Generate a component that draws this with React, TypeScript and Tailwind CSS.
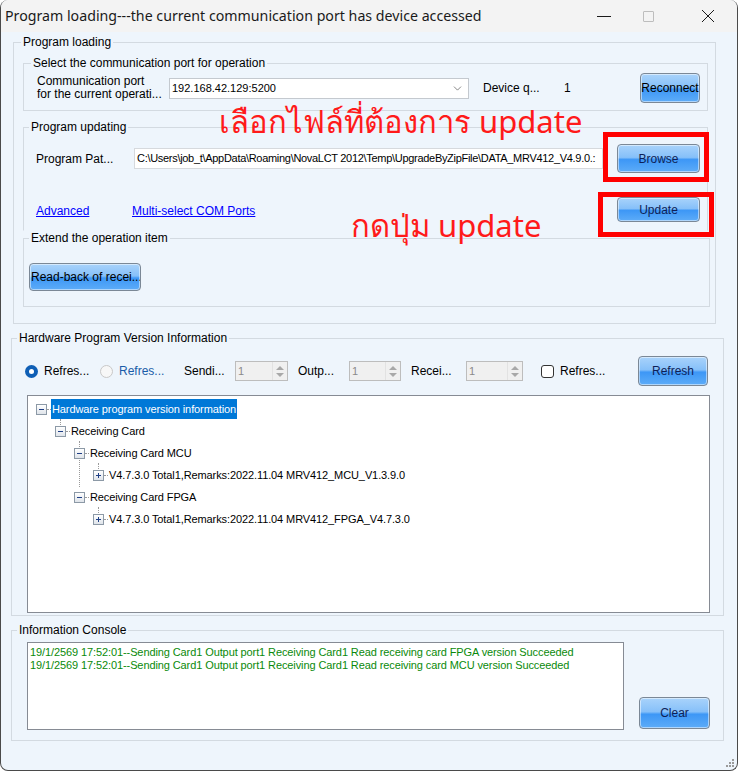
import { ChevronDown } from 'lucide-react';

// Shared classes for the glossy blue WinForms-style buttons
const BTN =
  'shrink-0 flex items-center justify-center rounded-[4px] border border-[#7b8896] bg-[linear-gradient(180deg,#a9d3fb_0%,#86c0f9_46%,#3d97f6_54%,#5dacf8_100%)] shadow-[inset_0_0_0_1px_rgba(255,255,255,0.5)] text-[12px]';
const GROUP = 'border border-[#d3dae1]';
const LEGEND = 'px-[2px] leading-[14px] text-[12px] text-black';

function SpinBox({ width }: { width: string }) {
  return (
    <div className={`${width} shrink-0 h-[20px] flex border border-[#bdbdbd] bg-[#f0f0f0]`}>
      <span className="flex-1 pl-[2px] text-[11px] leading-[18px] text-[#8a8a8a]">1</span>
      <div className="w-[15px] flex flex-col items-center justify-center gap-[3px] border-l border-[#e2e2e2]">
        <span className="w-0 h-0 border-x-[4px] border-x-transparent border-b-[4px] border-b-[#a8a8a8]" />
        <span className="w-0 h-0 border-x-[4px] border-x-transparent border-t-[4px] border-t-[#a8a8a8]" />
      </div>
    </div>
  );
}

function Expander({ open }: { open: boolean }) {
  return (
    <span className="relative shrink-0 w-[11px] h-[11px] border border-[#8c99a6] bg-[linear-gradient(180deg,#ffffff,#dfe4ea)]">
      <span className="absolute left-[2px] top-[4px] w-[5px] h-[1px] bg-[#1f3f86]" />
      {!open && <span className="absolute left-[4px] top-[2px] w-[1px] h-[5px] bg-[#1f3f86]" />}
    </span>
  );
}

const TREE_ROWS = [
  { indent: 'pl-[8px]', label: 'Hardware program version information', open: true, selected: true },
  { indent: 'pl-[27px]', label: 'Receiving Card', open: true },
  { indent: 'pl-[46px]', label: 'Receiving Card MCU', open: true },
  { indent: 'pl-[65px]', label: 'V4.7.3.0 Total1,Remarks:2022.11.04 MRV412_MCU_V1.3.9.0', open: false },
  { indent: 'pl-[46px]', label: 'Receiving Card FPGA', open: true },
  { indent: 'pl-[65px]', label: 'V4.7.3.0 Total1,Remarks:2022.11.04 MRV412_FPGA_V4.7.3.0', open: false },
];

function Tree() {
  return (
    <div className="relative ml-[10px] h-[218px] border border-[#868b94] bg-white pt-[2px]">
      {/* dotted connectors */}
      <span className="absolute left-[32px] top-[23px] h-[6px] border-l border-dotted border-[#9a9a9a]" />
      <span className="absolute left-[51px] top-[45px] h-[6px] border-l border-dotted border-[#9a9a9a]" />
      <span className="absolute left-[51px] top-[62px] h-[29px] border-l border-dotted border-[#9a9a9a]" />
      <span className="absolute left-[70px] top-[67px] h-[6px] border-l border-dotted border-[#9a9a9a]" />
      <span className="absolute left-[70px] top-[111px] h-[6px] border-l border-dotted border-[#9a9a9a]" />
      {TREE_ROWS.map((row, i) => (
        <div key={i} className={`${row.indent} h-[22px] flex items-center text-[11px] tracking-[-0.1px]`}>
          <Expander open={row.open} />
          <span className="w-[4px] border-t border-dotted border-[#9a9a9a]" />
          <span
            className={
              row.selected
                ? 'px-[1px] leading-[20px] bg-[#0078d7] text-white'
                : 'px-[1px] leading-[20px] text-black'
            }
          >
            {row.label}
          </span>
        </div>
      ))}
    </div>
  );
}

export default function App() {
  return (
    <div className="relative w-[738px] h-[771px] overflow-hidden rounded-[8px] border-x border-b border-[#4a4a4a] bg-[#eef5fc] font-['Liberation_Sans',Arial,sans-serif] text-[12px] text-black">
      {/* Title bar */}
      <div className="h-[32px] flex items-center bg-[#f3f3f3] pl-[4px]">
        <span className="font-['Noto_Sans',sans-serif] text-[14.2px] text-[#1a1a1a]">
          Program loading---the current communication port has device accessed
        </span>
        <div className="ml-auto flex items-center h-full">
          <span className="w-[14px] h-[1px] bg-[#1a1a1a] mr-[32px]" />
          <span className="w-[11px] h-[11px] border border-[#bdbdbd] rounded-[1px] mr-[47px]" />
          <svg width="14" height="14" viewBox="0 0 14 14" className="mr-[22px]">
            <path d="M1 1 L13 13 M13 1 L1 13" stroke="#1a1a1a" strokeWidth="1" />
          </svg>
        </div>
      </div>

      {/* Program loading */}
      <fieldset className={`${GROUP} ml-[12px] mt-[3px] w-[703px] pl-[7px] pr-[7px] pb-[16px]`}>
        <legend className={LEGEND}>Program loading</legend>

        <fieldset className={`${GROUP} mt-[7px] ml-[2px] pl-[7px] pr-[7px] pb-[4px]`}>
          <legend className={LEGEND}>Select the communication port for operation</legend>
          <div className="h-[36px] flex items-center">
            <div className="ml-[6px] w-[132px] shrink-0 leading-[13px]">
              Communication port
              <br />
              for the current operati...
            </div>
            <div className="w-[300px] h-[21px] shrink-0 flex items-center border border-[#c4c9cf] bg-white pl-[2px] pr-[4px] text-[11px]">
              <span className="flex-1">192.168.42.129:5200</span>
              <ChevronDown size={13} strokeWidth={1.3} color="#555" />
            </div>
            <span className="ml-[14px] w-[81px] shrink-0">Device q...</span>
            <span>1</span>
            <button className={`${BTN} ml-auto w-[60px] h-[30px] text-black whitespace-nowrap`}>Reconnect</button>
          </div>
        </fieldset>

        <fieldset className={`${GROUP} mt-[9px] ml-[2px] border-b-transparent pl-[5px] pr-[7px] pb-[8px]`}>
          <legend className={LEGEND}>Program updating</legend>
          <div className="mt-[10px] h-[29px] flex items-center">
            <span className="ml-[7px] w-[98px] shrink-0">Program Pat...</span>
            <div className="w-[469px] h-[21px] shrink-0 overflow-hidden whitespace-nowrap border border-[#d6d9dd] bg-white pl-[2px] text-[11px] leading-[19px] tracking-[-0.3px]">
              C:\Users\job_t\AppData\Roaming\NovaLCT 2012\Temp\UpgradeByZipFile\DATA_MRV412_V4.9.0.:
            </div>
            <button className={`${BTN} ml-[14px] w-[83px] h-[29px] text-[#0e1f57]`}>Browse</button>
          </div>
          <div className="mt-[24px] h-[25px] flex items-center">
            <a className="ml-[7px] w-[96px] shrink-0 pt-[3px] text-[#0000ff] underline">Advanced</a>
            <a className="pt-[3px] text-[#0000ff] underline">Multi-select COM Ports</a>
            <button className={`${BTN} ml-auto w-[83px] h-[25px] text-[#0e1f57]`}>Update</button>
          </div>
        </fieldset>

        <fieldset className={`${GROUP} ml-[2px] mr-[-2px] pl-[5px] pb-[15px]`}>
          <legend className={LEGEND}>Extend the operation item</legend>
          <button className={`${BTN} mt-[18px] w-[112px] h-[28px] text-black !justify-start whitespace-nowrap overflow-hidden pl-[1px]`}>
            Read-back of recei...
          </button>
        </fieldset>
      </fieldset>

      {/* Hardware Program Version Information */}
      <fieldset className={`${GROUP} ml-[10px] mt-[7px] w-[713px] pl-[5px] pr-[13px] pb-[2px]`}>
        <legend className={LEGEND}>Hardware Program Version Information</legend>
        <div className="mt-[11px] h-[30px] flex items-center">
          <span className="ml-[8px] w-[13px] h-[13px] shrink-0 rounded-full bg-[#0f5fb5] flex items-center justify-center">
            <span className="w-[5px] h-[5px] rounded-full bg-white" />
          </span>
          <span className="ml-[6px] w-[56px] shrink-0">Refres...</span>
          <span className="w-[13px] h-[13px] shrink-0 rounded-full border border-[#c8c8c8] bg-[#f7f7f7]" />
          <span className="ml-[6px] w-[65px] shrink-0 text-[#1a5ca8]">Refres...</span>
          <span className="w-[51px] shrink-0">Sendi...</span>
          <SpinBox width="w-[53px]" />
          <span className="ml-[10px] w-[51px] shrink-0">Outp...</span>
          <SpinBox width="w-[52px]" />
          <span className="ml-[10px] w-[55px] shrink-0">Recei...</span>
          <SpinBox width="w-[57px]" />
          <span className="ml-[18px] w-[13px] h-[13px] shrink-0 rounded-[3px] border border-[#333] bg-white" />
          <span className="ml-[6px] w-[78px] shrink-0">Refres...</span>
          <button className={`${BTN} w-[70px] h-[30px] text-[#0e1f57]`}>Refresh</button>
        </div>
        <div className="mt-[9px]">
          <Tree />
        </div>
      </fieldset>

      {/* Information Console */}
      <fieldset className={`${GROUP} ml-[10px] mt-[7px] w-[713px] pl-[5px] pr-[13px] pb-[10px]`}>
        <legend className={LEGEND}>Information Console</legend>
        <div className="mt-[5px] flex items-end">
          <div className="ml-[10px] w-[597px] h-[88px] shrink-0 border border-[#868b94] bg-white pl-[2px] pt-[3px] text-[11px] leading-[13px] tracking-[-0.1px] text-[#0a8a0a] whitespace-nowrap overflow-hidden">
            <div>19/1/2569 17:52:01--Sending Card1 Output port1 Receiving Card1 Read receiving card FPGA version Succeeded</div>
            <div>19/1/2569 17:52:01--Sending Card1 Output port1 Receiving Card1 Read receiving card MCU version Succeeded</div>
          </div>
          <button className={`${BTN} ml-[15px] mb-[1px] w-[71px] h-[32px] text-[#0e1f57]`}>Clear</button>
        </div>
      </fieldset>

      {/* Resize grip */}
      <svg width="10" height="10" viewBox="0 0 10 10" className="absolute right-[2px] bottom-[2px]">
        {[
          [8, 2],
          [5, 5],
          [8, 5],
          [2, 8],
          [5, 8],
          [8, 8],
        ].map(([x, y], i) => (
          <rect key={i} x={x - 1} y={y - 1} width="2" height="2" fill="#9a9a9a" />
        ))}
      </svg>

      {/* Red annotations */}
      <span className="absolute left-[218px] top-[101px] text-[31px] leading-[40px] text-[#ff1a1a] whitespace-nowrap font-['Noto_Sans',sans-serif]">
        เลือกไฟล์ที่ต้องการ update
      </span>
      <span className="absolute left-[350px] top-[205px] text-[31px] leading-[40px] text-[#ff1a1a] whitespace-nowrap font-['Noto_Sans',sans-serif]">
        กดปุ่ม update
      </span>
      <div className="absolute left-[602px] top-[132px] w-[106px] h-[50px] border-[5px] border-[#ff0000]" />
      <div className="absolute left-[597px] top-[192px] w-[116px] h-[45px] border-[5px] border-[#ff0000]" />
    </div>
  );
}
